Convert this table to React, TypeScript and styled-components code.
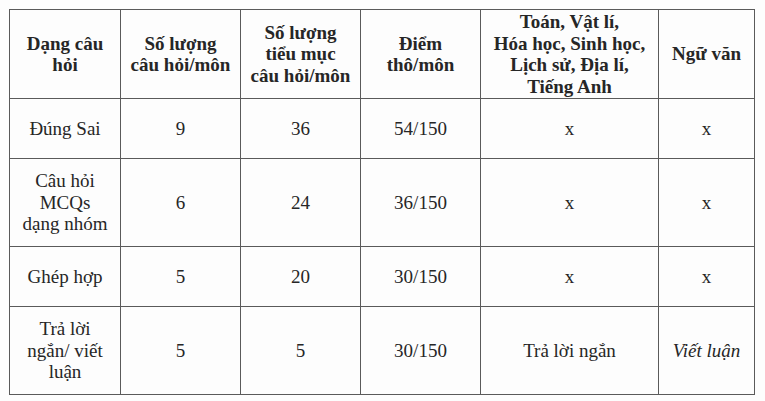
import React from 'react'
import styled, { createGlobalStyle } from 'styled-components'

const GlobalStyle = createGlobalStyle`
  html, body {
    margin: 0;
    padding: 0;
    background: #fdfdfd;
  }
`

const Page = styled.div`
  width: 765px;
  height: 401px;
  padding: 9px 0 0 9px;
  box-sizing: border-box;
  overflow: hidden;
  font-family: "Liberation Serif", "Times New Roman", serif;
  color: #262626;
`

const Table = styled.table`
  border-collapse: collapse;
  table-layout: fixed;
  width: 745px;
`

const Col = styled.col<{ $w: number }>`
  width: ${p => p.$w}px;
`

const HeadCell = styled.th`
  box-sizing: border-box;
  height: 89px;
  border: 1.5px solid #5a5a5a;
  font-size: 19px;
  line-height: 21.5px;
  font-weight: bold;
  text-align: center;
  vertical-align: middle;
  padding: 0 2px;
`

const Cell = styled.td<{ $tall?: boolean; $italic?: boolean }>`
  box-sizing: border-box;
  height: ${p => (p.$tall ? 88 : 60)}px;
  border: 1.5px solid #5a5a5a;
  font-size: 19px;
  line-height: 21.5px;
  font-style: ${p => (p.$italic ? 'italic' : 'normal')};
  text-align: center;
  vertical-align: middle;
  padding: 0 2px;
`

type Row = {
  kind: React.ReactNode
  count: string
  items: string
  score: string
  sci: string
  lit: string
  tall?: boolean
  italicLit?: boolean
}

const rows: Row[] = [
  { kind: 'Đúng Sai', count: '9', items: '36', score: '54/150', sci: 'x', lit: 'x' },
  { kind: <>Câu hỏi<br />MCQs<br />dạng nhóm</>, count: '6', items: '24', score: '36/150', sci: 'x', lit: 'x', tall: true },
  { kind: 'Ghép hợp', count: '5', items: '20', score: '30/150', sci: 'x', lit: 'x' },
  { kind: <>Trả lời<br />ngắn/ viết<br />luận</>, count: '5', items: '5', score: '30/150', sci: 'Trả lời ngắn', lit: 'Viết luận', tall: true, italicLit: true },
]

const widths = [111, 120, 120, 120, 178, 96]

export default function App() {
  return (
    <Page>
      <GlobalStyle />
      <Table>
        <colgroup>
          {widths.map((w, i) => <Col key={'col' + i} $w={w} />)}
        </colgroup>
        <thead>
          <tr>
            <HeadCell>Dạng câu<br />hỏi</HeadCell>
            <HeadCell>Số lượng<br />câu hỏi/môn</HeadCell>
            <HeadCell>Số lượng<br />tiểu mục<br />câu hỏi/môn</HeadCell>
            <HeadCell>Điểm<br />thô/môn</HeadCell>
            <HeadCell>Toán, Vật lí,<br />Hóa học, Sinh học,<br />Lịch sử, Địa lí,<br />Tiếng Anh</HeadCell>
            <HeadCell>Ngữ văn</HeadCell>
          </tr>
        </thead>
        <tbody>
          {rows.map((r, i) => (
            <tr key={'row' + i}>
              <Cell $tall={r.tall}>{r.kind}</Cell>
              <Cell $tall={r.tall}>{r.count}</Cell>
              <Cell $tall={r.tall}>{r.items}</Cell>
              <Cell $tall={r.tall}>{r.score}</Cell>
              <Cell $tall={r.tall}>{r.sci}</Cell>
              <Cell $tall={r.tall} $italic={r.italicLit}>{r.lit}</Cell>
            </tr>
          ))}
        </tbody>
      </Table>
    </Page>
  )
}
